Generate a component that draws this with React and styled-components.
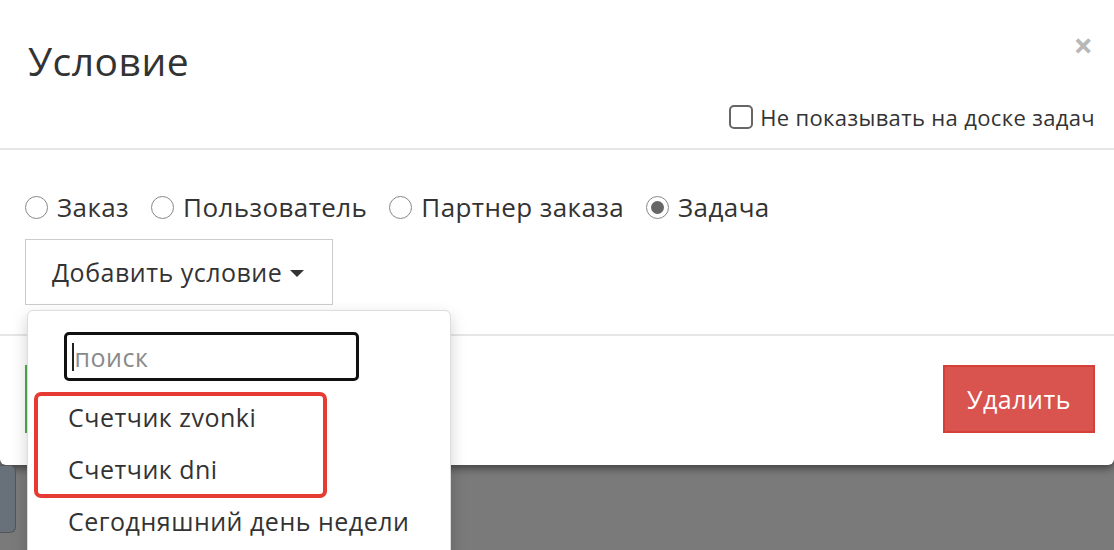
import styled, { createGlobalStyle } from "styled-components";

const GlobalStyle = createGlobalStyle`
    html, body {
        margin: 0;
        padding: 0;
    }
    body {
        background: #777;
        font-family: "Open Sans", Lato, sans-serif;
        letter-spacing: 0.5px;
        color: #333;
        overflow: hidden;
    }
`;

const Page = styled.div`
    position: relative;
    height: 550px;
    display: flex;
    flex-direction: column;
    background: linear-gradient(#3f3f3f 0px, #6e6e6e 30px, #7a7a7a 80px);
`;

const Modal = styled.div`
    background: #fff;
    height: 465px;
    border-radius: 0 0 6px 6px;
    box-shadow: 0 3px 9px rgba(0, 0, 0, 0.5);
    display: flex;
    flex-direction: column;
`;

const Header = styled.header`
    height: 150px;
    border-bottom: 2px solid #e6e6e6;
    padding: 0 19px 0 28px;
    display: flex;
    flex-direction: column;
    box-sizing: border-box;
`;

const HeaderTop = styled.div`
    display: flex;
    justify-content: space-between;
    align-items: flex-start;
    padding-top: 36px;
`;

const Title = styled.h4`
    margin: 0;
    font-size: 39px;
    font-weight: 400;
    line-height: 50px;
    color: #333;
`;

const Close = styled.span`
    font-size: 34px;
    font-weight: 700;
    line-height: 1;
    color: #b8b8b8;
    margin-top: -8px;
    margin-right: 2px;
    letter-spacing: 0;
`;

const CheckRow = styled.label`
    align-self: flex-end;
    display: flex;
    align-items: center;
    gap: 7px;
    margin-top: 16px;
    font-size: 22px;
    letter-spacing: 0.35px;
    color: #333;
`;

const CheckBox = styled.span`
    width: 20px;
    height: 20px;
    border: 2px solid #666;
    border-radius: 5px;
`;

const Body = styled.div`
    height: 184px;
    padding: 39px 25px 0 25px;
    box-sizing: border-box;
    display: flex;
    flex-direction: column;
    gap: 14px;
`;

const RadioRow = styled.div`
    display: flex;
    align-items: center;
    gap: 22px;
    font-size: 26px;
    letter-spacing: 0.4px;
`;

const RadioLabel = styled.label`
    display: flex;
    align-items: center;
    gap: 9px;
`;

const Radio = styled.span`
    width: 21px;
    height: 21px;
    border: 1.5px solid #888;
    border-radius: 50%;
    display: flex;
    align-items: center;
    justify-content: center;
    box-sizing: content-box;
    &::after {
        content: "";
        width: 13px;
        height: 13px;
        border-radius: 50%;
        background: ${(p) => (p.checked ? "#666" : "transparent")};
    }
`;

const AddButton = styled.button`
    align-self: flex-start;
    width: 308px;
    height: 66px;
    border: 1.5px solid #ccc;
    background: #fff;
    font-family: inherit;
    letter-spacing: inherit;
    font-size: 25px;
    color: #333;
    display: flex;
    align-items: center;
    padding: 0 0 0 26px;
    gap: 8px;
`;

const Caret = styled.span`
    width: 0;
    height: 0;
    border-left: 7px solid transparent;
    border-right: 7px solid transparent;
    border-top: 7px solid #333;
    margin-top: 3px;
`;

const Footer = styled.div`
    flex: 1;
    border-top: 2px solid #e6e6e6;
    padding: 29px 19px 0 25px;
    display: flex;
    justify-content: space-between;
    align-items: flex-start;
`;

const Button = styled.button`
    height: 68px;
    border: 2px solid ${(p) => (p.variant === "danger" ? "#d43f3a" : "#4cae4c")};
    background: ${(p) => (p.variant === "danger" ? "#d9534f" : "#5cb85c")};
    color: #fff;
    font-family: inherit;
    letter-spacing: inherit;
    font-size: 25px;
    padding: 0 20px;
    min-width: ${(p) => (p.variant === "danger" ? "152px" : "160px")};
`;

const Backdrop = styled.div`
    flex: 1;
    display: flex;
    align-items: flex-start;
`;

const Stub = styled.div`
    width: 15px;
    height: 66px;
    background: #68707a;
    border: 1px solid #555;
    border-left: none;
    border-radius: 0 6px 6px 0;
`;

const Dropdown = styled.div`
    position: absolute;
    left: 27px;
    top: 310px;
    width: 424px;
    height: 280px;
    background: #fff;
    border: 1px solid #ddd;
    border-radius: 6px;
    box-shadow: 0 6px 16px rgba(0, 0, 0, 0.18);
    padding-top: 21px;
    box-sizing: border-box;
`;

const Search = styled.div`
    margin-left: 36px;
    width: 295px;
    height: 49px;
    border: 3px solid #111;
    border-radius: 5px;
    box-sizing: border-box;
    display: flex;
    align-items: center;
    padding-left: 5px;
    font-size: 25px;
    color: #8a8a8a;
    &::before {
        content: "";
        width: 1.5px;
        height: 28px;
        background: #222;
        margin-right: 1px;
    }
`;

const Item = styled.div`
    height: 52px;
    display: flex;
    align-items: center;
    padding-left: 40px;
    font-size: 25px;
    color: #333;
    &:first-of-type {
        margin-top: 10px;
    }
`;

const Highlight = styled.div`
    position: absolute;
    left: 6px;
    top: 81px;
    width: 293px;
    height: 106px;
    border: 4px solid #e53b33;
    border-radius: 7px;
    box-sizing: border-box;
`;

const App = () => {
    return (
        <>
            <GlobalStyle />
            <Page>
                <Modal>
                    <Header>
                        <HeaderTop>
                            <Title>Условие</Title>
                            <Close>×</Close>
                        </HeaderTop>
                        <CheckRow>
                            <CheckBox />
                            Не показывать на доске задач
                        </CheckRow>
                    </Header>
                    <Body>
                        <RadioRow>
                            <RadioLabel><Radio />Заказ</RadioLabel>
                            <RadioLabel><Radio />Пользователь</RadioLabel>
                            <RadioLabel><Radio />Партнер заказа</RadioLabel>
                            <RadioLabel><Radio checked />Задача</RadioLabel>
                        </RadioRow>
                        <AddButton>
                            Добавить условие <Caret />
                        </AddButton>
                    </Body>
                    <Footer>
                        <Button aria-label="Сохранить" />
                        <Button variant="danger">Удалить</Button>
                    </Footer>
                </Modal>
                <Backdrop>
                    <Stub />
                </Backdrop>
                <Dropdown>
                    <Search>поиск</Search>
                    <div>
                        <Item>Счетчик zvonki</Item>
                        <Item>Счетчик dni</Item>
                        <Item>Сегодняшний день недели</Item>
                    </div>
                    <Highlight />
                </Dropdown>
            </Page>
        </>
    );
};

export default App;
